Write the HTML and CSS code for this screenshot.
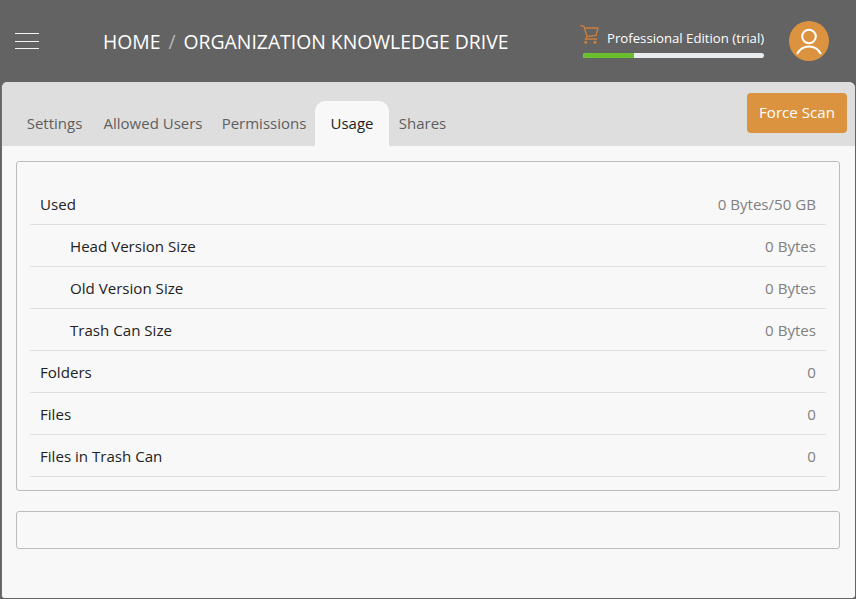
FILE: index.html
```html
<!DOCTYPE html>
<html lang="en">
<head>
<meta charset="utf-8">
<title>Organization Knowledge Drive</title>
<link rel="stylesheet" href="styles.css">
</head>
<body>
<header class="topbar">
  <button class="burger" aria-label="Menu"><span></span><span></span><span></span></button>
  <nav class="crumbs"><span>HOME</span><span class="sep">/</span><span>ORGANIZATION KNOWLEDGE DRIVE</span></nav>
  <div class="edition">
    <div class="edition-line">
      <svg class="cart" viewBox="0 0 20 20" width="20" height="20" fill="none" stroke="#cd7f3c" stroke-width="1.3">
        <path d="M0.300 0.300L4 1.500L7 11.500L5.500 14H17"/><path d="M4.500 3H18L16 10.500L7 11.500"/>
        <circle cx="5.800" cy="17.300" r="1.500" fill="#cd7f3c" stroke="none"/><circle cx="15" cy="17.300" r="1.500" fill="#cd7f3c" stroke="none"/>
      </svg>
      <span class="edition-name">Professional Edition (trial)</span>
    </div>
    <div class="progress"><div class="progress-fill"></div></div>
  </div>
  <div class="avatar">
    <svg viewBox="0 0 40 40" width="40" height="40" fill="none" stroke="#fff" stroke-width="2">
      <circle cx="20" cy="15.500" r="6.800"/><path d="M8 33c3-5.500 7.500-7.500 12-7.500s9 2 12 7.500"/>
    </svg>
  </div>
</header>
<main class="panel">
  <div class="tabbar">
    <ul class="tabs">
      <li class="tab">Settings</li>
      <li class="tab">Allowed Users</li>
      <li class="tab">Permissions</li>
      <li class="tab active">Usage</li>
      <li class="tab">Shares</li>
    </ul>
    <button class="scan">Force Scan</button>
  </div>
  <div class="content">
    <section class="card">
      <div class="row"><span>Used</span><span class="val">0 Bytes/50 GB</span></div>
      <div class="row sub"><span>Head Version Size</span><span class="val">0 Bytes</span></div>
      <div class="row sub"><span>Old Version Size</span><span class="val">0 Bytes</span></div>
      <div class="row sub"><span>Trash Can Size</span><span class="val">0 Bytes</span></div>
      <div class="row"><span>Folders</span><span class="val">0</span></div>
      <div class="row"><span>Files</span><span class="val">0</span></div>
      <div class="row"><span>Files in Trash Can</span><span class="val">0</span></div>
    </section>
    <section class="card empty"></section>
  </div>
</main>
</body>
</html>
```

FILE: styles.css
```css
* { box-sizing: border-box; }
html, body { height: 100%; }
body {
  margin: 0;
  overflow: hidden;
  display: flex;
  flex-direction: column;
  background: #636363;
  font-family: "Open Sans", "Noto Sans", sans-serif;
  font-size: 15.1px;
  color: #222;
}
.topbar {
  height: 82px;
  flex: none;
  display: flex;
  align-items: center;
  color: #fff;
}
.burger {
  width: 24px;
  height: 16px;
  margin-left: 15px;
  padding: 0;
  border: 0;
  background: none;
  display: flex;
  flex-direction: column;
  justify-content: space-between;
}
.burger span { display: block; height: 1px; background: #f4f4f4; }
.crumbs {
  margin-left: 64px;
  font-size: 19.35px;
  display: flex;
  gap: 8px;
}
.sep { color: #b5b5b5; }
.edition {
  margin-left: auto;
  width: 183px;
  flex: none;
}
.edition-line { display: flex; align-items: center; height: 28px; margin-left: -3px; }
.cart { flex: none; margin-top: -6px; }
.edition-name { margin-left: 7px; font-size: 13.2px; white-space: nowrap; }
.progress {
  height: 5px;
  margin-top: 1px;
  width: 181px;
  border-radius: 3px;
  background: #e9ecef;
  overflow: hidden;
}
.progress-fill { width: 28%; height: 100%; background: #6bbf2e; }
.avatar {
  width: 40px;
  height: 40px;
  margin: 0 27px 0 23px;
  border-radius: 50%;
  background: #dc9340;
  flex: none;
}
.panel {
  flex: 1;
  margin: 0 1px 1px 1px;
  border-left: 1px solid #6f6f6f;
  border-radius: 6px 6px 3px 3px;
  background: #f8f8f8;
  overflow: hidden;
  display: flex;
  flex-direction: column;
}
.tabbar {
  height: 64px;
  flex: none;
  background: #dedede;
  display: flex;
  align-items: flex-end;
  justify-content: space-between;
  padding: 0 8px 0 14px;
}
.tabs {
  list-style: none;
  margin: 0;
  padding: 0;
  display: grid;
  grid-template-columns: 77px 120px 102px 74px 67px;
  font-size: 15px;
  color: #5f5f5f;
}
.tab {
  height: 45px;
  padding-top: 12px;
  text-align: center;
  white-space: nowrap;
}
.tab.active {
  background: #f8f8f8;
  color: #222;
  border-radius: 10px 10px 0 0;
}
.scan {
  align-self: flex-start;
  margin-top: 11px;
  width: 100px;
  height: 40px;
  padding: 0 0 2px;
  border: 0;
  border-radius: 4px;
  background: #dc9340;
  color: #fff;
  font: inherit;
}
.content { padding: 15px 15px 0 14px; }
.card {
  border: 1px solid #bcbcbc;
  border-radius: 3px;
  padding: 21px 13px 13px;
}
.card.empty { margin-top: 20px; height: 38px; padding: 0; }
.row {
  height: 42px;
  display: flex;
  align-items: center;
  justify-content: space-between;
  padding: 0 10px;
  border-bottom: 1px solid #dedede;
}
.row.sub { padding-left: 40px; }
.val { color: #808080; }
```
